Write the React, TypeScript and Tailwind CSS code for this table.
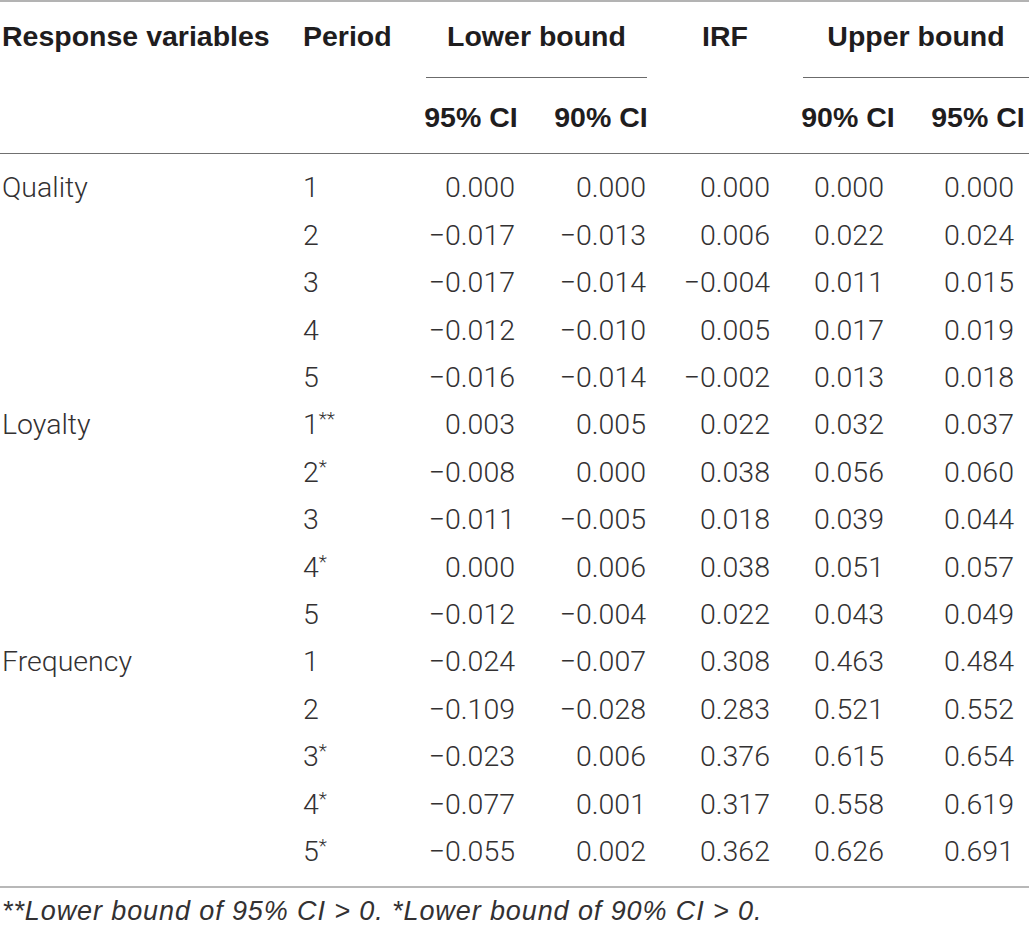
import React from 'react'

type Row = {
  group?: string
  period: string
  stars?: string
  lo95: string
  lo90: string
  irf: string
  up90: string
  up95: string
}

const rows: Row[] = [
  { group: 'Quality', period: '1', lo95: '0.000', lo90: '0.000', irf: '0.000', up90: '0.000', up95: '0.000' },
  { period: '2', lo95: '−0.017', lo90: '−0.013', irf: '0.006', up90: '0.022', up95: '0.024' },
  { period: '3', lo95: '−0.017', lo90: '−0.014', irf: '−0.004', up90: '0.011', up95: '0.015' },
  { period: '4', lo95: '−0.012', lo90: '−0.010', irf: '0.005', up90: '0.017', up95: '0.019' },
  { period: '5', lo95: '−0.016', lo90: '−0.014', irf: '−0.002', up90: '0.013', up95: '0.018' },
  { group: 'Loyalty', period: '1', stars: '**', lo95: '0.003', lo90: '0.005', irf: '0.022', up90: '0.032', up95: '0.037' },
  { period: '2', stars: '*', lo95: '−0.008', lo90: '0.000', irf: '0.038', up90: '0.056', up95: '0.060' },
  { period: '3', lo95: '−0.011', lo90: '−0.005', irf: '0.018', up90: '0.039', up95: '0.044' },
  { period: '4', stars: '*', lo95: '0.000', lo90: '0.006', irf: '0.038', up90: '0.051', up95: '0.057' },
  { period: '5', lo95: '−0.012', lo90: '−0.004', irf: '0.022', up90: '0.043', up95: '0.049' },
  { group: 'Frequency', period: '1', lo95: '−0.024', lo90: '−0.007', irf: '0.308', up90: '0.463', up95: '0.484' },
  { period: '2', lo95: '−0.109', lo90: '−0.028', irf: '0.283', up90: '0.521', up95: '0.552' },
  { period: '3', stars: '*', lo95: '−0.023', lo90: '0.006', irf: '0.376', up90: '0.615', up95: '0.654' },
  { period: '4', stars: '*', lo95: '−0.077', lo90: '0.001', irf: '0.317', up90: '0.558', up95: '0.619' },
  { period: '5', stars: '*', lo95: '−0.055', lo90: '0.002', irf: '0.362', up90: '0.626', up95: '0.691' }
]

const cols = 'grid grid-cols-[300px_120px_102px_128px_150px_100px_129px]'

export default function App() {
  return (
    <div className="w-[1029px] h-[926px] bg-white text-[#1f1d1e] overflow-hidden">
      {/* Header */}
      <div
        className={`${cols} border-t-2 border-t-[#b3b3b3] border-b border-b-[#707070] font-['Liberation_Sans',Arial,sans-serif] font-bold text-[28.5px] leading-[30px]`}
      >
        <div className="row-span-2 pl-[2px] pt-[19px]">Response variables</div>
        <div className="row-span-2 pl-[3px] pt-[19px]">Period</div>
        <div className="col-span-2 pl-[6px] pr-[3px]">
          <div className="h-[68px] flex items-center justify-center">Lower bound</div>
          <div className="mt-[7px] h-px bg-[#6b6b6b]" />
        </div>
        <div className="row-span-2 pt-[19px] text-center">IRF</div>
        <div className="col-span-2 pl-[3px]">
          <div className="h-[68px] flex items-center justify-center">Upper bound</div>
          <div className="mt-[7px] h-px bg-[#6b6b6b]" />
        </div>
        <div className="h-[75px] pt-[24px] text-center">95% CI</div>
        <div className="h-[75px] pt-[24px] pl-[30px] text-center">90% CI</div>
        <div className="h-[75px] pt-[24px] pr-[4px] text-center">90% CI</div>
        <div className="h-[75px] pt-[24px] pl-[27px] text-center">95% CI</div>
      </div>

      {/* Body */}
      <div className="pt-[11px] pb-[10px] font-['Roboto','Liberation_Sans',sans-serif] font-light text-[28.5px] text-[#333132] border-b-2 border-b-[#b8b8b8]">
        {rows.map((r, i) => (
          <div key={i} className={`${cols} h-[47.4px] items-center leading-none`}>
            <div className="pl-[2px]">{r.group ?? ''}</div>
            <div className="pl-[3px]">
              {r.period}
              {r.stars && <span className="text-[19px] align-top relative -top-[2px]">{r.stars}</span>}
            </div>
            <div className="text-right pr-[7px]">{r.lo95}</div>
            <div className="text-right pr-[4px]">{r.lo90}</div>
            <div className="text-right pr-[30px]">{r.irf}</div>
            <div className="text-right pr-[16px]">{r.up90}</div>
            <div className="text-right pr-[15px]">{r.up95}</div>
          </div>
        ))}
      </div>

      {/* Footnote */}
      <div className="pt-[11px] pl-[2px] font-['Liberation_Sans',Arial,sans-serif] italic text-[27px] leading-[24px] tracking-[0.9px] text-[#333132] whitespace-nowrap">
        **Lower bound of 95% CI &gt; 0. *Lower bound of 90% CI &gt; 0.
      </div>
    </div>
  )
}
